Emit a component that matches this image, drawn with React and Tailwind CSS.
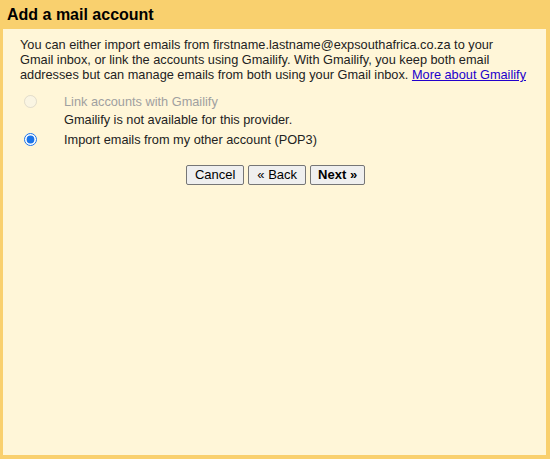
export default function App() {
  return (
    <div className="w-[550px] h-[459px] bg-[#f9d06e] relative" style={{ fontFamily: '"Liberation Sans", Arial, sans-serif' }}>
      <div className="h-[30px] pl-[7px] pt-[5px] text-[16px] font-bold text-black leading-[19px]">Add a mail account</div>
      <div className="absolute left-[3px] top-[29px] w-[543px] h-[426px] bg-[#fff6d8] text-[12.75px] leading-[15px] text-[#222]">
        <div className="pl-[17px] pt-[8px] whitespace-nowrap">
          You can either import emails from firstname.lastname@expsouthafrica.co.za to your
          <br />
          Gmail inbox, or link the accounts using Gmailify. With Gmailify, you keep both email
          <br />
          addresses but can manage emails from both using your Gmail inbox.{" "}
          <a href="#" className="underline text-[#2200cc]">More about Gmailify</a>
        </div>
        <div className="mt-[10px] pl-[21px]">
          <div className="flex items-center h-[18px]">
            <input type="radio" disabled className="w-[13px] h-[13px] m-0 opacity-60" />
            <span className="ml-[27px] text-[#a0a0a0]">Link accounts with Gmailify</span>
          </div>
          <div className="pl-[40px] h-[19px] flex items-center">Gmailify is not available for this provider.</div>
          <div className="flex items-center h-[21px]">
            <input type="radio" defaultChecked name="r" className="w-[13px] h-[13px] m-0 accent-[#1a73e8]" />
            <span className="ml-[27px]">Import emails from my other account (POP3)</span>
          </div>
        </div>
        <div className="flex justify-center gap-[4px] mt-[15px] pl-[2px]">
          <button className="h-[20px] px-[8px] bg-[#efefef] border border-[#767676] rounded-[2px] text-[13px] leading-[16px] text-black">Cancel</button>
          <button className="h-[20px] px-[8px] bg-[#efefef] border border-[#767676] rounded-[2px] text-[13px] leading-[16px] text-black">« Back</button>
          <button className="h-[20px] px-[7px] bg-[#efefef] border border-[#767676] rounded-[2px] text-[13px] leading-[16px] text-black font-bold">Next »</button>
        </div>
      </div>
    </div>
  );
}
